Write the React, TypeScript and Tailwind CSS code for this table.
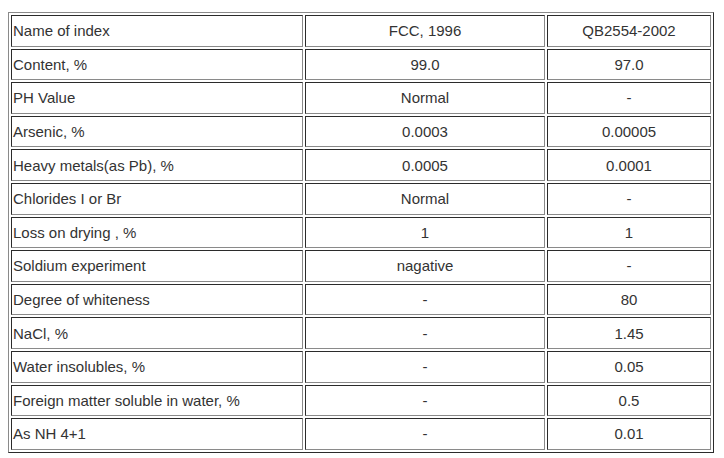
const rows: [string, string, string][] = [
  ["Name of index", "FCC, 1996", "QB2554-2002"],
  ["Content, %", "99.0", "97.0"],
  ["PH Value", "Normal", "-"],
  ["Arsenic, %", "0.0003", "0.00005"],
  ["Heavy metals(as Pb), %", "0.0005", "0.0001"],
  ["Chlorides I or Br", "Normal", "-"],
  ["Loss on drying , %", "1", "1"],
  ["Soldium experiment", "nagative", "-"],
  ["Degree of whiteness", "-", "80"],
  ["NaCl, %", "-", "1.45"],
  ["Water insolubles, %", "-", "0.05"],
  ["Foreign matter soluble in water, %", "-", "0.5"],
  ["As NH 4+1", "-", "0.01"],
];

const cell =
  "border border-solid border-t-[#2b2b2b] border-l-[#2b2b2b] border-b-[#8a8a8a] border-r-[#8a8a8a] p-[1px] align-middle";

export default function App() {
  return (
    <div className="w-[724px] h-[458px] bg-white pt-[12px] pl-[8px] text-[15px] leading-[17px] text-[#333] font-['Liberation_Sans',Arial,sans-serif]">
      <table className="w-[706px] table-fixed border-separate border-spacing-[2px] border border-solid border-t-[#8a8a8a] border-l-[#8a8a8a] border-b-[#2b2b2b] border-r-[#2b2b2b]">
        <tbody>
          {rows.map((r) => (
            <tr key={r[0]} className="h-[31.6px]">
              <td className={`${cell} w-[292px] text-left`}>{r[0]}</td>
              <td className={`${cell} w-[240px] text-center`}>{r[1]}</td>
              <td className={`${cell} w-[164px] text-center`}>{r[2]}</td>
            </tr>
          ))}
        </tbody>
      </table>
    </div>
  );
}
